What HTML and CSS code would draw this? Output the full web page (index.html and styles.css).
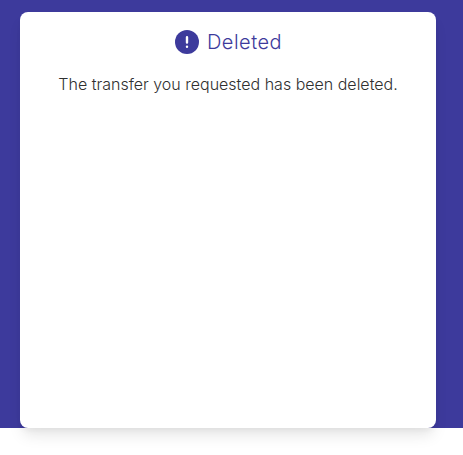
FILE: index.html
```html
<!DOCTYPE html>
<html lang="en">
<head>
<meta charset="utf-8">
<title>Deleted</title>
<link rel="stylesheet" href="styles.css">
</head>
<body>
<main class="backdrop">
  <section class="card">
    <h1 class="title">
      <svg class="icon" viewBox="0 0 24 24" aria-hidden="true"><circle cx="12" cy="12" r="12" fill="#3d3a9c"/><path d="M12 7.2v5.3M12 16.6v.2" stroke="#fff" stroke-width="2.4" stroke-linecap="round"/></svg>
      <span>Deleted</span>
    </h1>
    <p class="message">The transfer you requested has been deleted.</p>
  </section>
</main>
</body>
</html>
```
FILE: styles.css
```css
body {
  margin: 0;
  min-height: 455px;
  background: #fff;
  font-family: Inter, sans-serif;
}
.backdrop {
  box-sizing: border-box;
  height: 428px;
  padding: 12px 27px 0 20px;
  background: #3d3a9c;
}
.card {
  box-sizing: border-box;
  height: 416px;
  padding-top: 16px;
  border-radius: 8px;
  background: #fff;
  box-shadow: 0 10px 15px -3px rgba(0, 0, 0, 0.1), 0 4px 6px -2px rgba(0, 0, 0, 0.05);
  text-align: center;
}
.title {
  display: flex;
  justify-content: center;
  align-items: center;
  gap: 8px;
  height: 28px;
  margin: 0;
  padding-left: 1px;
  color: #3d3a9c;
  font-size: 20px;
  font-weight: 300;
  letter-spacing: 0.5px;
}
.icon {
  width: 24px;
  height: 24px;
}
.message {
  margin: 16px 0 0;
  color: #303030;
  font-size: 16px;
  font-weight: 300;
  line-height: 24px;
}
```
